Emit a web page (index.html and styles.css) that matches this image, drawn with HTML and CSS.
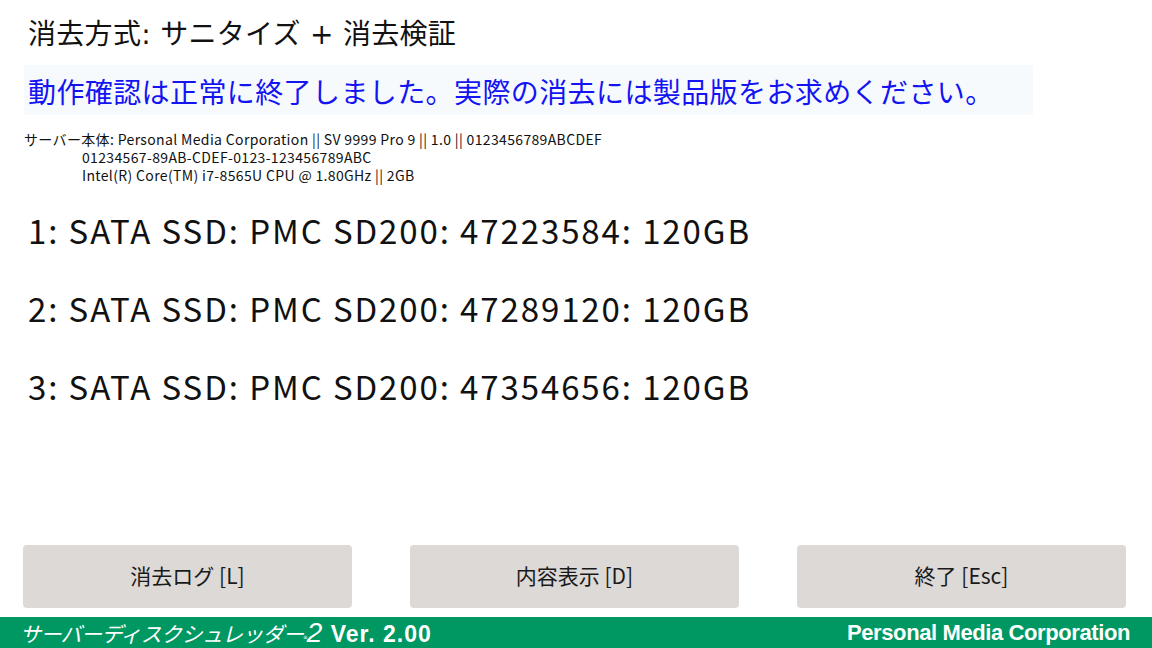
FILE: index.html
```html
<html>

<head>
    <meta charset="utf-8">
    <link rel="stylesheet" href="styles.css">
</head>

<body>
    <div class="screen">
        <div class="title">消去方式: サニタイズ + 消去検証</div>
        <div class="notice">動作確認は正常に終了しました。実際の消去には製品版をお求めください。</div>
        <div class="info">
            <div>サーバー本体: Personal Media Corporation || SV 9999 Pro 9 || 1.0 || 0123456789ABCDEF</div>
            <div class="indent">01234567-89AB-CDEF-0123-123456789ABC</div>
            <div class="indent">Intel(R) Core(TM) i7-8565U CPU @ 1.80GHz || 2GB</div>
        </div>
        <div class="drives">
            <div class="drive">1: SATA SSD: PMC SD200: 47223584: 120GB</div>
            <div class="drive">2: SATA SSD: PMC SD200: 47289120: 120GB</div>
            <div class="drive">3: SATA SSD: PMC SD200: 47354656: 120GB</div>
        </div>
        <div class="buttons">
            <div class="btn">消去ログ [L]</div>
            <div class="btn">内容表示 [D]</div>
            <div class="btn">終了 [Esc]</div>
        </div>
        <div class="footer">
            <div class="product">
                <span class="logo">サーバーディスクシュレッダー<span class="reg">®</span><span class="two">2</span></span>
                <span class="ver">Ver. 2.00</span>
            </div>
            <div class="company">Personal Media Corporation</div>
        </div>
    </div>
</body>

</html>
```

FILE: styles.css
```css
body {
    margin: 0;
    background: #fff;
    color: #111;
    font-family: 'Noto Sans CJK JP', 'Noto Sans', sans-serif;
}
.screen {
    width: 1152px;
    height: 648px;
    display: flex;
    flex-direction: column;
    overflow: hidden;
}
.title {
    margin-top: 17px;
    padding-left: 28px;
    font-family: 'DejaVu Sans', 'Noto Sans CJK JP', sans-serif;
    font-size: 28px;
    line-height: 36px;
    letter-spacing: 0.3px;
}
.notice {
    margin: 12px 0 0 24px;
    width: 1009px;
    height: 50px;
    padding: 2px 0 0 4px;
    box-sizing: border-box;
    line-height: 48px;
    font-size: 28px;
    letter-spacing: 0.4px;
    color: #1414f2;
    background-color: #f7fafd;
}
.info {
    margin-top: 15px;
    padding-left: 24px;
    font-size: 14px;
    letter-spacing: 0.35px;
    line-height: 18px;
}
.info .indent {
    padding-left: 58px;
}
.drives {
    margin-top: 7px;
    padding-left: 28px;
}
.drive {
    font-size: 33px;
    letter-spacing: 1.9px;
    line-height: 78px;
}
.buttons {
    margin-top: auto;
    margin-bottom: 9px;
    padding-left: 23px;
    display: grid;
    grid-template-columns: 329px 329px 329px;
    gap: 58px;
}
.btn {
    height: 63px;
    padding-bottom: 3px;
    box-sizing: border-box;
    background-color: #dcd9d6;
    border-radius: 4px;
    display: flex;
    align-items: center;
    justify-content: center;
    font-size: 21px;
    color: #1a1a1a;
}
.footer {
    height: 31px;
    background-color: #009862;
    color: #fff;
    display: flex;
    align-items: center;
    justify-content: space-between;
    padding: 0 22px 0 20px;
}
.product {
    display: flex;
    align-items: baseline;
    gap: 9px;
}
.logo {
    font-style: italic;
    font-size: 21px;
    letter-spacing: -0.6px;
}
.logo .reg {
    font-size: 8px;
    font-style: normal;
}
.logo .two {
    font-family: 'Liberation Sans', sans-serif;
    font-weight: 300;
    font-size: 28px;
    line-height: 20px;
}
.ver, .company {
    font-family: 'Liberation Sans', sans-serif;
    font-weight: bold;
}
.ver {
    font-size: 23px;
    letter-spacing: 1px;
}
.company {
    font-size: 22px;
    letter-spacing: -0.4px;
}
```
